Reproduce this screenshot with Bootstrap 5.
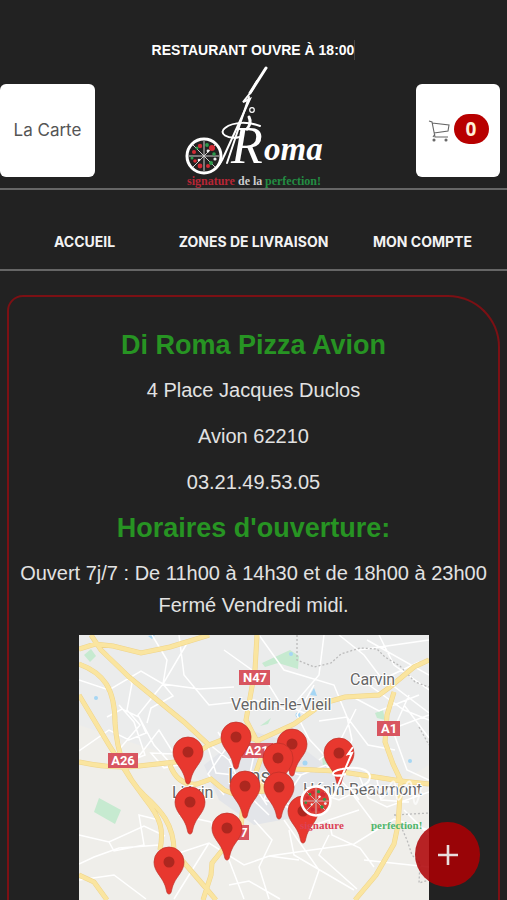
<!DOCTYPE html>
<html lang="fr">
<head>
<meta charset="utf-8">
<meta name="viewport" content="width=device-width, initial-scale=1">
<title>Di Roma Pizza Avion</title>
<link href="https://cdn.jsdelivr.net/npm/bootstrap@5.3.0/dist/css/bootstrap.min.css" rel="stylesheet">
<style>
body { background: #222; color: #e2e2e2; font-family: "Liberation Sans", Arial, sans-serif; }
.site-head, .site-nav { border-bottom: 2px solid #666; }
.site-head { padding-top: 40px; }
.side-slot { width: 95px; padding-bottom: 11px; }
.tile-btn { background: #fff; color: #555; height: 93px; border-radius: 6px; border: 0; font-family: Inter, sans-serif; font-size: 17px; }
.tile-btn.wide { width: 95px; }
.tile-btn.cart { width: 84px; margin-right: 7px; }
.cart-count { background: #b80000; color: #fff0d8; border-radius: 15px; width: 35px; height: 30px; font-family: "Open Sans", sans-serif; font-size: 19px; font-weight: 700; line-height: 30px; }
.status { font-size: 14px; line-height: 20px; font-weight: 700; color: #fff; border-right: 1px solid #444; }
.logo { width: 140px; height: 122px; margin-top: 6px; }
.site-nav { height: 81px; }
.site-nav a { font-family: Inter, sans-serif; font-size: 14px; font-weight: 700; color: #f3f3f3; padding-top: 24px; }
.shop { margin: 24px 7px 0 7px; border: 2px solid #7c1014; border-bottom: 0; border-radius: 16px 52px 0 0; padding-top: 32px; }
.shop h2 { color: #279423; font-size: 27px; line-height: 32px; font-weight: 700; margin-bottom: 13px; }
.shop p { font-size: 20px; line-height: 32px; margin-bottom: 14px; }
.map-box { max-width: 350px; }
.fab { width: 65px; height: 65px; right: 27px; bottom: 13px; background: rgba(174,0,4,.86); border: 0; }
</style>
</head>
<body>
<div class="min-vh-100 d-flex flex-column">
<header class="site-head d-flex justify-content-between align-items-end">
  <div class="side-slot"><button type="button" class="tile-btn wide p-0">La Carte</button></div>
  <div class="d-flex flex-column align-items-center">
    <div class="status text-nowrap">RESTAURANT OUVRE À 18:00</div>
    <a href="#" class="d-block" aria-label="Di Roma">
    <svg class="logo d-block" viewBox="0 0 140 122">
      <defs>
        <g id="pizza">
          <circle r="17" fill="none" stroke="#fff" stroke-width="3"/>
          <path d="M-15 0H15M0-15V15M-11-11L11 11M-11 11L11-11" stroke="#ccc" stroke-width="1"/>
          <g fill="#d32a34"><circle cx="-4" cy="-10" r="2.2"/><circle cx="8" cy="-8" r="3"/><circle cx="-10" cy="-4" r="2"/><circle cx="-4" cy="10" r="2.4"/><circle cx="4" cy="10" r="2"/><circle cx="-9" cy="5" r="1.8"/></g>
          <g fill="#2c9a4b"><circle cx="3" cy="-11" r="1.9"/><circle cx="10" cy="-2" r="1.8"/><circle cx="7" cy="7" r="2"/><circle cx="-7" cy="-8" r="1.5"/><circle cx="-12" cy="2" r="1.5"/></g>
          <g fill="#eee"><circle cx="11" cy="3" r="1.6"/><circle cx="-5" cy="4" r="1.3"/><circle cx="4" cy="-5" r="1.4"/></g>
        </g>
      </defs>
      <use href="#pizza" x="20" y="90"/>
      <g fill="none" stroke="#fff" stroke-linecap="round">
        <path d="M82 2L66 27" stroke-width="3"/>
        <path d="M73 15L67 26L59 36L66 33L40 90Q37 98 31 103" stroke-width="2"/>
        <path d="M65 31L43 97" stroke-width="2"/>
        <circle cx="68" cy="44" r="2.3" stroke-width="1.2"/>
        <path d="M65 51Q68 57 63 63" stroke-width="3"/>
        <path d="M56 71C43 74 34 67 41 62C50 55 66 56 76 60" stroke-width="2"/>
      </g>
      <g fill="#fff" font-family="Liberation Serif, serif" font-style="italic">
        <text x="47" y="97" font-size="52">R</text>
        <text x="80" y="94" font-size="33" font-weight="700">oma</text>
      </g>
      <g font-family="Liberation Serif, serif" font-size="12" font-weight="700">
        <text x="3" y="119" fill="#b82636">signature</text>
        <text x="54" y="119" fill="#ccc">de la</text>
        <text x="81" y="119" fill="#238d42">perfection!</text>
      </g>
    </svg></a>
  </div>
  <div class="side-slot d-flex justify-content-end">
    <button type="button" class="tile-btn cart p-0 d-flex align-items-center justify-content-center flex-shrink-0" aria-label="Panier">
      <svg width="22" height="24" viewBox="0 0 22 24" fill="none" stroke="#666" stroke-width="1.1"><path d="M1 2L4 3L7 18H20M4 4L21 6L20 12L6 14M7 15L5 18"/><circle cx="6" cy="21" r="1" fill="#555"/><circle cx="18" cy="21" r="1" fill="#555"/></svg>
      <span class="cart-count mb-1 ms-1">0</span>
    </button>
  </div>
</header>
<nav class="site-nav row g-0 align-items-center text-center">
  <a class="col-4 text-decoration-none text-nowrap" href="#">ACCUEIL</a>
  <a class="col-4 text-decoration-none text-nowrap" href="#">ZONES DE LIVRAISON</a>
  <a class="col-4 text-decoration-none text-nowrap" href="#">MON COMPTE</a>
</nav>
<main class="shop flex-grow-1 text-center">
  <h2>Di Roma Pizza Avion</h2>
  <p>4 Place Jacques Duclos</p>
  <p>Avion 62210</p>
  <p>03.21.49.53.05</p>
  <h2>Horaires d'ouverture:</h2>
  <p>Ouvert 7j/7 : De 11h00 à 14h30 et de 18h00 à 23h00<br>Fermé Vendredi midi.</p>
  <div class="map-box mx-auto">
  <svg class="d-block w-100" viewBox="0 0 350 265" role="img" aria-label="Carte des restaurants">
    <defs><g id="pin"><path d="M0 32C-3 32-2 27-5 21C-8 14-15 9-15 0A15 15 0 0 1 15 0C15 9 8 14 5 21C2 27 3 32 0 32Z" fill="#e8382f" stroke="#bd3028" stroke-width=".7"/><circle r="5.5" fill="#ad271f"/></g></defs>
    <rect width="350" height="265" fill="#efeeea"/>
    <path d="M95 0H350V130Q290 170 230 150L150 170L90 120L0 90V0Z" fill="#ebecec"/>
    <path d="M125 130L170 95L220 110L265 145L230 180L175 190L140 165Z" fill="#e3e5e9"/>
    <g fill="#c6ead0"><path d="M20 163L42 175L36 189L15 177Z"/><path d="M183 28L211 15L220 21L219 34L199 28L186 32Z"/><path d="M5 20L12 14L17 21L11 27Z"/><path d="M181 91L192 83L189 89Z"/><path d="M296 78L304 75L306 85L298 83Z"/><path d="M243 122L250 120L253 130L244 131Z"/></g>
    <g fill="#a5d6f4"><path d="M231 60L235 53L238 61Z"/><path d="M69 1L76 0L73 4Z"/><circle cx="219" cy="80" r="2.5"/><circle cx="212" cy="19" r="2"/><circle cx="331" cy="126" r="2"/><circle cx="17" cy="63" r="2"/><circle cx="226" cy="128" r="2.5"/></g>
    <g fill="none" stroke="#fff" stroke-width="1.5">
      <path d="M0 45L30 55L62 36L84 49L110 5M84 49L88 25L73 0M84 49L59 80L75 110L93 130M84 49L120 54L155 52M84 49L94 61L72 73L68 88M30 20L53 48L48 75L61 90L38 117M0 116L30 95L50 105L67 98L60 82L43 74L28 82M57 125L80 95L95 119L72 118L85 133L109 128M40 70L55 87L66 120L40 130M100 0L105 40L130 70L175 65L210 75L240 40L245 0M145 15L187 45L201 68L230 80M180 0L205 35L255 50L268 82L273 105L258 140M260 0L285 20L300 40L350 78M280 15L350 5M300 0L315 30L350 55M302 45L340 27M283 45L325 75L350 85M270 60L300 76L340 60M235 50L218 80L230 104L245 120M240 86L268 82L289 110L316 115M277 74L259 110L240 125M310 95L350 80M325 70L350 103M330 60L314 96L328 135L350 145M288 5L350 40"/>
      <path d="M0 200L30 207L65 191L86 201M0 229L15 222L40 213L80 210M30 207L35 216L65 210L60 180L80 185M100 180L132 187L150 225L165 264M100 218L130 208L165 230L190 221L220 225M175 185L193 205L180 232L190 264M210 195L215 220L275 255M205 185L240 235L230 264M250 185L253 200L281 213L295 232M190 221L275 209L315 184L350 195M130 208L95 264M0 245L35 240L67 264M285 225L350 232M150 250L170 246L201 264M325 175L350 200M250 200L240 220L278 254"/>
      <path d="M125 105L150 125L176 115L195 134L222 140L247 130M129 112L137 138L174 142L207 160M139 97L148 112L129 139L145 160M150 125L165 156L190 180M176 115L170 143L188 170M195 134L185 165L225 177M222 140L205 165L235 190L280 175M230 155L260 165L291 150L320 156M247 130L269 153L295 188M280 140L289 163L308 172L350 157M297 140L302 165L330 167"/>
    </g>
    <path d="M218 0V25L235 32L252 28L262 19L281 13L298 14L306 22L321 31L336 47L350 52M315 180L350 178M317 180L328 205L333 220L341 228L340 248L350 245M340 92L350 110" fill="none" stroke="#bbb" stroke-width="1.3" stroke-dasharray="2 2"/>
    <defs><path id="roads" d="M0 14L16 9L34 11L62 18L91 12L130 0M12 0L22 15L50 42L105 87L130 110L155 100L180 105L215 89L245 68L266 62L300 60L311 52L335 32L350 25M0 29C25 38 36 54 36 88C38 118 47 143 65 160C82 175 95 190 95 216L126 252L137 265M0 60L30 110L51 143L67 165C82 184 85 195 81 215M0 127Q32 134 60 131T105 126L130 110M91 130Q99 151 118 149L132 144L145 155L155 159L185 156L177 137L183 120L168 115M178 0L176 35L167 85L184 118L215 134L257 136L303 143L322 146L350 149M315 57L308 80L306 107L314 129L322 146L319 190L315 209L297 240L276 265M165 156L162 193L145 213L133 228L132 240L124 265M0 240L15 247L28 265"/></defs>
    <use href="#roads" fill="none" stroke="#efd48a" stroke-width="5"/>
    <use href="#roads" fill="none" stroke="#fae5a0" stroke-width="4"/>
    <g fill="#d85560"><rect x="160" y="35" width="31" height="15"/><rect x="29" y="118" width="30" height="15"/><rect x="298" y="86" width="23" height="15"/><rect x="163" y="108" width="31" height="15"/><rect x="150" y="190" width="20" height="15"/></g>
    <g fill="#fff" font-family="Roboto, sans-serif" font-size="13" font-weight="700" text-anchor="middle"><text x="176" y="47">N47</text><text x="44" y="130">A26</text><text x="310" y="98">A1</text><text x="178" y="120">A21</text><text x="165" y="202">7</text></g>
    <g fill="#666" stroke="#fff" stroke-width="2" paint-order="stroke" font-family="Roboto, sans-serif" font-size="16"><text x="271" y="50">Carvin</text><text x="152" y="75">Vendin-le-Vieil</text><text x="93" y="163">Liévin</text><text x="149" y="148" font-size="20">Lens</text><text x="224" y="160">Hénin-Beaumont</text></g>
    <use href="#pin" x="109" y="117"/><use href="#pin" x="157" y="102"/><use href="#pin" x="213" y="109"/><use href="#pin" x="199" y="123"/><use href="#pin" x="260" y="118"/><use href="#pin" x="166" y="151"/><use href="#pin" x="111" y="167"/><use href="#pin" x="224" y="176"/><use href="#pin" x="200" y="152"/><use href="#pin" x="148" y="193"/><use href="#pin" x="90" y="227"/>
    <circle cx="237" cy="166" r="14" fill="#df3c35"/>
    <use href="#pizza" transform="translate(237 166) scale(.85)"/>
    <g fill="none" stroke="#fff" stroke-width="2"><path d="M274 112L269 119L273 118L254 162M267 139C252 144 249 136 263 134C283 130 296 137 289 147C283 153 277 153 271 153L280 165"/><path d="M290 160Q298 146 300 158T309 154T317 156T325 155T334 159T342 152" stroke-opacity=".7"/></g>
    <g font-family="Liberation Serif, serif" font-size="11" font-weight="700"><text x="221" y="194" fill="#dc4256">signature</text><text x="292" y="194" fill="#4fb66c">perfection!</text></g>
  </svg>
  </div>
</main>
</div>
<button type="button" class="fab rounded-circle position-fixed p-0 d-flex align-items-center justify-content-center" aria-label="Ajouter">
  <svg width="20" height="20" viewBox="0 0 20 20"><path d="M10 0V20M0 10H20" stroke="#e8dede" stroke-width="2.6"/></svg>
</button>
<script src="https://cdn.jsdelivr.net/npm/bootstrap@5.3.0/dist/js/bootstrap.bundle.min.js"></script>
</body>
</html>
